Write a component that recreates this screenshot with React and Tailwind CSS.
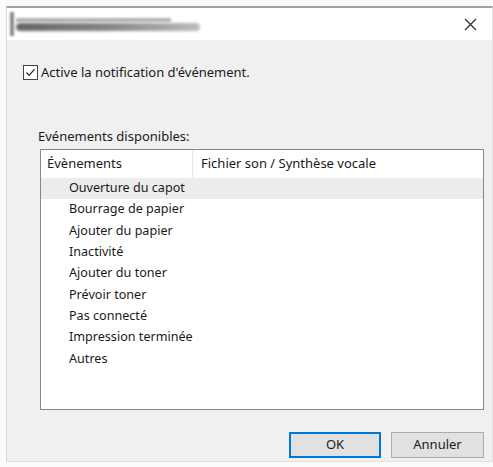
import React from "react";

const EVENTS = [
  "Ouverture du capot",
  "Bourrage de papier",
  "Ajouter du papier",
  "Inactivité",
  "Ajouter du toner",
  "Prévoir toner",
  "Pas connecté",
  "Impression terminée",
  "Autres",
];

const font = { fontFamily: "'Noto Sans', 'DejaVu Sans', sans-serif" };

export default function App() {
  return (
    <div className="w-[493px] h-[467px] bg-[#fbfbfb] pt-[6px] pl-[6px] overflow-hidden" style={font}>
      <div className="h-[456px] flex flex-col border-t-2 border-l border-r border-t-[#9ea3a6] border-l-[#d8d8d8] border-r-[#e4e4e4] border-b border-b-[#e2e2e2]">
        {/* title bar (blurred title) */}
        <div className="h-[32px] bg-white flex items-center justify-between shrink-0">
          <div className="ml-[3px] flex items-center gap-[2px]">
            <div className="w-[4px] h-[24px] bg-[#8a8a8a] blur-[1px]" />
            <div className="flex flex-col gap-[1px]">
              <div className="w-[155px] h-[4px] bg-[#b3b3b3] blur-[1px]" />
              <div className="w-[184px] h-[8px] bg-gradient-to-r from-[#656565] via-[#858585] to-[#bdbdbd] blur-[1.5px] rounded" />
            </div>
          </div>
          <svg className="mr-[15px]" width="13" height="13" viewBox="0 0 13 13">
            <path d="M1 1 L12 12 M12 1 L1 12" stroke="#2b2b2b" strokeWidth="1.2" />
          </svg>
        </div>

        {/* body */}
        <div className="flex-1 bg-[#f0f0f0] flex flex-col pl-[16px] pr-[8px]">
          <label className="mt-[23px] flex items-center gap-[3px] text-[13px] text-[#1a1a1a]">
            <span className="w-[15px] h-[15px] border border-[#444] bg-white flex items-center justify-center shrink-0">
              <svg width="11" height="11" viewBox="0 0 11 11">
                <path d="M1.5 5.5 L4.2 8.3 L9.5 2.2" fill="none" stroke="#222" strokeWidth="1.2" />
              </svg>
            </span>
            <span>Active la notification d'événement.</span>
          </label>

          <div className="mt-[44px] ml-[15px] text-[13px] text-[#1a1a1a] leading-[18px]">Evénements disponibles:</div>

          <div className="mt-[4px] ml-[17px] h-[261px] bg-white border border-[#828790] flex flex-col">
            <div className="h-[28px] flex items-center text-[13px] text-[#1a1a1a] shrink-0">
              <div className="w-[152px] h-full pl-[6px] flex items-center border-r border-[#e5e5e5]">Évènements</div>
              <div className="pl-[8px]">Fichier son / Synthèse vocale</div>
            </div>
            <div className="flex flex-col text-[12.6px] text-[#1a1a1a]">
              {EVENTS.map((ev, i) => (
                <div
                  key={ev}
                  className={`h-[21.4px] flex items-center pl-[28px] ${i === 0 ? "bg-[#ececec]" : ""}`}
                >
                  {ev}
                </div>
              ))}
            </div>
          </div>

          <div className="mt-[22px] flex justify-end gap-[10px]">
            <button className="w-[92px] h-[26px] bg-[#e1e1e1] border-2 border-[#0078d7] text-[13px] text-[#1a1a1a]">
              OK
            </button>
            <button className="w-[93px] h-[26px] bg-[#e1e1e1] border border-[#adadad] text-[13px] text-[#1a1a1a]">
              Annuler
            </button>
          </div>
        </div>
      </div>
    </div>
  );
}
